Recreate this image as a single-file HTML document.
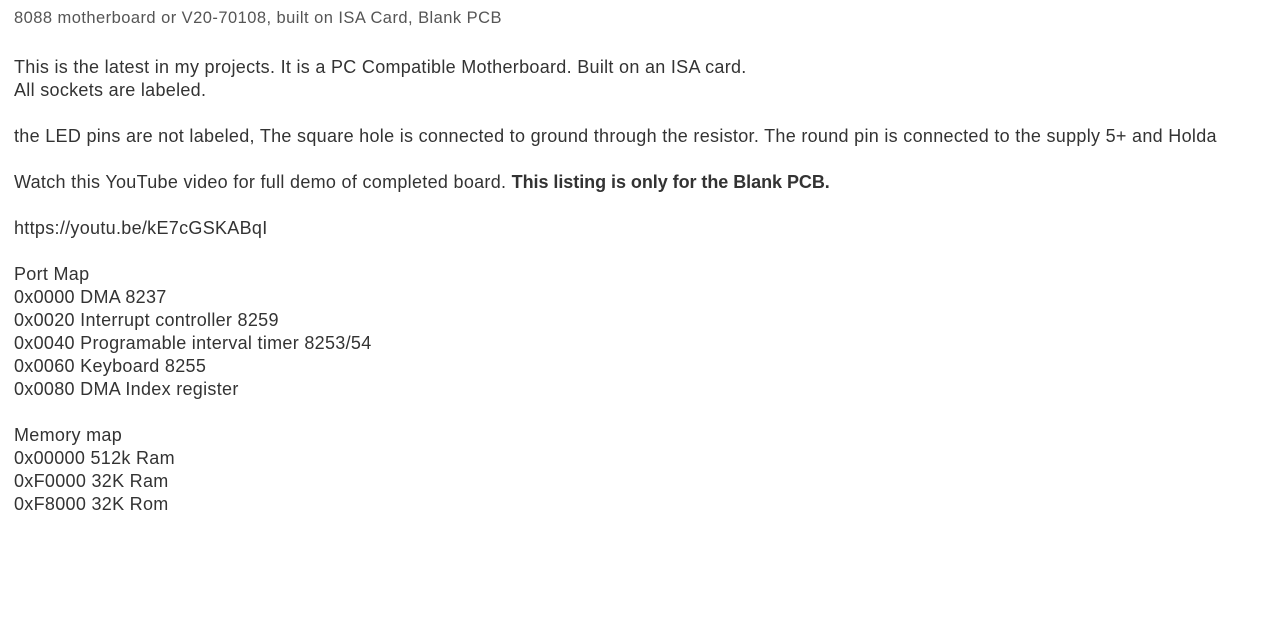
<!DOCTYPE html>
<html><head><meta charset="utf-8"><style>
body{margin:0;background:#fff;font-family:"Liberation Sans",sans-serif;}
.t{position:absolute;left:14px;top:7px;font-size:16.5px;line-height:23px;color:#555;letter-spacing:0.45px}
.b{position:absolute;left:14px;top:56px;font-size:18px;line-height:23px;color:#333;letter-spacing:0.3px;white-space:nowrap}
.b b{letter-spacing:-0.05px}
</style></head><body>
<div class="t">8088 motherboard or V20-70108, built on ISA Card, Blank PCB</div>
<div class="b">This is the latest in my projects. It is a PC Compatible Motherboard. Built on an ISA card.<br>All sockets are labeled.<br><br>the LED pins are not labeled, The square hole is connected to ground through the resistor. The round pin is connected to the supply 5+ and Holda<br><br>Watch this YouTube video for full demo of completed board. <b>This listing is only for the Blank PCB.</b><br><br>https://youtu.be/kE7cGSKABqI<br><br>Port Map<br>0x0000 DMA 8237<br>0x0020 Interrupt controller 8259<br>0x0040 Programable interval timer 8253/54<br>0x0060 Keyboard 8255<br>0x0080 DMA Index register<br><br>Memory map<br>0x00000 512k Ram<br>0xF0000 32K Ram<br>0xF8000 32K Rom</div>
</body></html>
